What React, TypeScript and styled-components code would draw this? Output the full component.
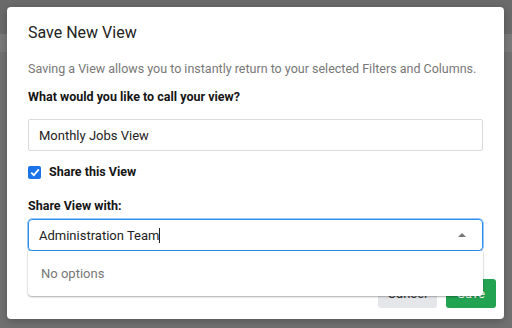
import styled, { createGlobalStyle } from "styled-components";

const Global = createGlobalStyle`
  html, body { margin: 0; padding: 0; }
  body {
    width: 512px;
    height: 328px;
    overflow: hidden;
    font-family: Roboto, "Liberation Sans", sans-serif;
  }
`;

const Backdrop = styled.div`
  width: 512px;
  height: 328px;
  box-sizing: border-box;
  padding: 7px 8px 9px 7px;
  background: linear-gradient(
    to bottom,
    #6b6b6b 0px,
    #6b6b6b 34px,
    #7a7a7a 34px,
    #7a7a7a 52px,
    #717171 52px
  );
`;

const Modal = styled.div`
  height: 100%;
  background: #fff;
  border-radius: 4px;
  display: flex;
  flex-direction: column;
  box-shadow: 0 2px 8px rgba(0, 0, 0, 0.25);
`;

const Header = styled.div`
  padding: 16px 21px 0;
`;

const Title = styled.h2`
  margin: 0;
  font-size: 16px;
  line-height: 20px;
  font-weight: 400;
  color: #222;
`;

const Body = styled.div`
  padding: 0 21px;
  display: flex;
  flex-direction: column;
`;

const Description = styled.p`
  margin: 17px 0 0;
  font-size: 12.5px;
  line-height: 18px;
  color: #777;
  white-space: nowrap;
`;

const Label = styled.div<{ $top: number }>`
  margin-top: ${(p) => p.$top}px;
  font-size: 12.5px;
  line-height: 16px;
  font-weight: 700;
  color: #151515;
`;

const Field = styled.div<{ $focused?: boolean }>`
  box-sizing: border-box;
  height: 32px;
  display: flex;
  align-items: center;
  padding: 0 10px;
  border: 1px solid ${(p) => (p.$focused ? "#2b8ef0" : "#d9d9de")};
  box-shadow: ${(p) => (p.$focused ? "0 0 0 0.5px #2b8ef0" : "none")};
  border-radius: ${(p) => (p.$focused ? "4px" : "2px")};
  font-size: 13px;
  color: #222;
`;

const NameField = styled(Field)`
  margin-top: 14px;
`;

const CheckRow = styled.label`
  margin-top: 13px;
  display: flex;
  align-items: center;
  gap: 8px;
  font-size: 12.5px;
  font-weight: 700;
  color: #151515;
  line-height: 16px;
`;

const CheckBox = styled.span`
  width: 13px;
  height: 13px;
  border-radius: 2px;
  background: #1a73e8;
  display: flex;
  align-items: center;
  justify-content: center;
`;

const SelectWrap = styled.div`
  position: relative;
  margin-top: 5px;
`;

const SelectValue = styled.span`
  flex: 1;
`;

const Caret = styled.span`
  display: inline-block;
  width: 1px;
  height: 15px;
  background: #222;
  vertical-align: -3px;
`;

const Arrow = styled.span`
  width: 0;
  height: 0;
  border-left: 4px solid transparent;
  border-right: 4px solid transparent;
  border-bottom: 4px solid #777;
  margin-right: 6px;
`;

const Menu = styled.div`
  position: absolute;
  left: 0;
  right: 0;
  top: 32px;
  height: 45px;
  background: #fff;
  border-radius: 0 0 4px 4px;
  box-shadow: 0 1px 2px rgba(0, 0, 0, 0.3), 0 0 0 0.5px rgba(0, 0, 0, 0.06);
  display: flex;
  align-items: center;
  padding: 0 13px;
  font-size: 13px;
  color: #777;
  z-index: 2;
`;

const Footer = styled.div`
  margin-top: auto;
  padding: 0 8px 11px 0;
  display: flex;
  justify-content: flex-end;
  gap: 9px;
`;

const Button = styled.button<{ $primary?: boolean }>`
  height: 29px;
  padding: 0 ${(p) => (p.$primary ? "11px" : "10px")};
  border: none;
  border-radius: 3px;
  font-family: inherit;
  font-size: 13px;
  background: ${(p) => (p.$primary ? "#21a351" : "#e4e6ea")};
  color: ${(p) => (p.$primary ? "#fff" : "#333")};
`;

export default function App() {
  return (
    <>
      <Global />
      <Backdrop>
        <Modal>
          <Header>
            <Title>Save New View</Title>
          </Header>
          <Body>
            <Description>
              Saving a View allows you to instantly return to your selected Filters and Columns.
            </Description>
            <Label $top={11}>What would you like to call your view?</Label>
            <NameField>Monthly Jobs View</NameField>
            <CheckRow>
              <CheckBox>
                <svg width="10" height="9" viewBox="0 0 10 9">
                  <path d="M1.2 4.6 L3.9 7.2 L8.8 1.4" fill="none" stroke="#fff" strokeWidth="1.8" />
                </svg>
              </CheckBox>
              Share this View
            </CheckRow>
            <Label $top={18}>Share View with:</Label>
            <SelectWrap>
              <Field $focused>
                <SelectValue>
                  Administration Team<Caret />
                </SelectValue>
                <Arrow />
              </Field>
              <Menu>No options</Menu>
            </SelectWrap>
          </Body>
          <Footer>
            <Button>Cancel</Button>
            <Button $primary>Save</Button>
          </Footer>
        </Modal>
      </Backdrop>
    </>
  );
}
